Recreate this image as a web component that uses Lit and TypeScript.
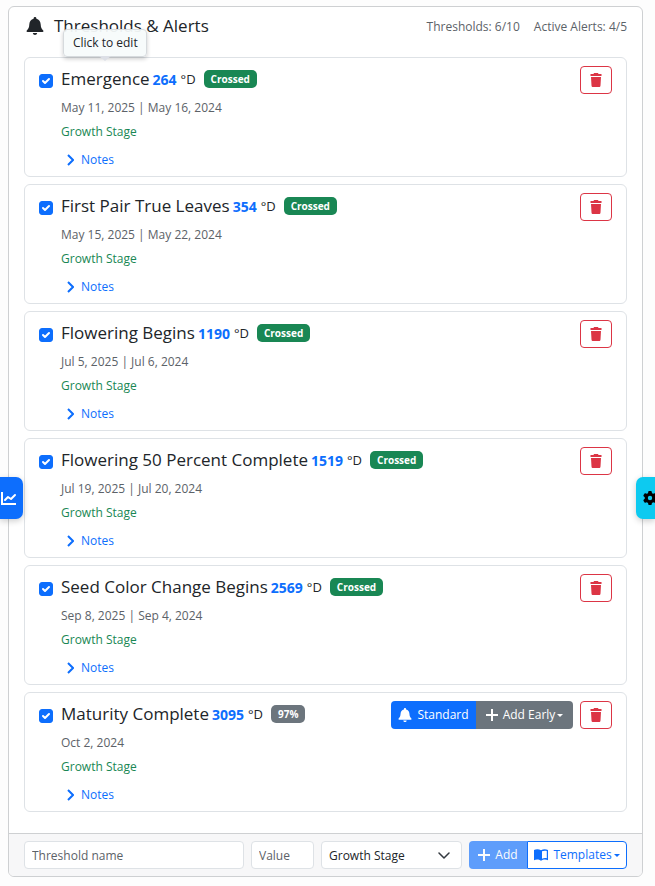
import { LitElement, html, css, svg, nothing } from "lit";
import { customElement, property } from "lit/decorators.js";

interface Threshold {
  name: string;
  value: number;
  status: string;
  crossed: boolean;
  dates: string;
}

const THRESHOLDS: Threshold[] = [
  { name: "Emergence", value: 264, status: "Crossed", crossed: true, dates: "May 11, 2025 | May 16, 2024" },
  { name: "First Pair True Leaves", value: 354, status: "Crossed", crossed: true, dates: "May 15, 2025 | May 22, 2024" },
  { name: "Flowering Begins", value: 1190, status: "Crossed", crossed: true, dates: "Jul 5, 2025 | Jul 6, 2024" },
  { name: "Flowering 50 Percent Complete", value: 1519, status: "Crossed", crossed: true, dates: "Jul 19, 2025 | Jul 20, 2024" },
  { name: "Seed Color Change Begins", value: 2569, status: "Crossed", crossed: true, dates: "Sep 8, 2025 | Sep 4, 2024" },
  { name: "Maturity Complete", value: 3095, status: "97%", crossed: false, dates: "Oct 2, 2024" },
];

const shapes = {
  bell: svg`<path fill="currentColor" d="M9 0C8.200 0 7.600 .6 7.600 1.400V1.800C5 2.500 3.400 4.600 3.300 7.500C3.200 10.500 2.400 12 .8 13.500C.2 14.200 .6 15 1.400 15H16.600C17.400 15 17.800 14.200 17.200 13.500C15.600 12 14.800 10.500 14.700 7.500C14.600 4.600 13 2.500 10.400 1.800V1.400C10.400 .6 9.800 0 9 0ZM6.800 16C7 17.300 7.900 18 9 18S11 17.300 11.200 16Z"/>`,
  trash: svg`<path fill="currentColor" d="M4 0H8L8.500 1H11.500V3H.5V1H3.500ZM1 4H11L10.500 12.500C10.400 13.500 9.900 14 9 14H3C2.100 14 1.600 13.500 1.500 12.500Z"/>`,
  gear: svg`<path fill="currentColor" d="M495.9 166.6c3.2 8.7 .5 18.4-6.4 24.6l-43.3 39.4c1.1 8.3 1.7 16.8 1.7 25.4s-.6 17.1-1.7 25.4l43.3 39.4c6.9 6.2 9.6 15.9 6.4 24.6c-4.4 11.9-9.7 23.3-15.8 34.3l-4.7 8.1c-6.6 11-14 21.4-22.1 31.2c-5.9 7.2-15.7 9.6-24.5 6.8l-55.7-17.7c-13.4 10.3-28.2 18.9-44 25.4l-12.5 57.1c-2 9.1-9 16.3-18.2 17.8c-13.8 2.3-28 3.5-42.5 3.5s-28.7-1.2-42.5-3.5c-9.2-1.5-16.2-8.7-18.2-17.8l-12.5-57.1c-15.8-6.5-30.6-15.1-44-25.4L83.1 425.9c-8.8 2.8-18.6 .3-24.5-6.8c-8.1-9.8-15.5-20.2-22.1-31.2l-4.7-8.1c-6.1-11-11.4-22.4-15.8-34.3c-3.2-8.7-.5-18.4 6.4-24.6l43.3-39.4C64.6 273.1 64 264.6 64 256s.6-17.1 1.7-25.4L22.4 191.2c-6.9-6.2-9.6-15.9-6.4-24.6c4.4-11.9 9.7-23.3 15.8-34.3l4.7-8.1c6.6-11 14-21.4 22.1-31.2c5.9-7.2 15.7-9.6 24.5-6.8l55.7 17.7c13.4-10.3 28.2-18.9 44-25.4l12.5-57.1c2-9.1 9-16.3 18.2-17.8C227.3 1.2 241.5 0 256 0s28.7 1.2 42.5 3.5c9.2 1.5 16.2 8.7 18.2 17.8l12.5 57.1c15.8 6.5 30.6 15.1 44 25.4l55.7-17.7c8.8-2.8 18.6-.3 24.5 6.8c8.1 9.8 15.5 20.2 22.1 31.2l4.7 8.1c6.1 11 11.4 22.4 15.8 34.3zM256 336a80 80 0 1 0 0-160 80 80 0 1 0 0 160z"/>`,
  chart: svg`<g fill="none" stroke="currentColor" stroke-width="2"><path d="M1 1v12h14"/><path d="M4 9l3-3 3 2 4-4" stroke-linecap="round" stroke-linejoin="round"/></g>`,
  plus: svg`<path d="M6 0v12M0 6h12" fill="none" stroke="currentColor" stroke-width="2"/>`,
  chevron: svg`<path d="M1 1l5 5-5 5" fill="none" stroke="currentColor" stroke-width="2"/>`,
  down: svg`<path d="M1 1l5 5 5-5" fill="none" stroke="currentColor" stroke-width="1.5" stroke-linecap="round" stroke-linejoin="round"/>`,
  check: svg`<path d="M4 7l2 2 4-4" fill="none" stroke="currentColor" stroke-width="2" stroke-linecap="round" stroke-linejoin="round"/>`,
  book: svg`<path fill="currentColor" fill-rule="evenodd" d="M0 2C2 1 5 1 7 2.200C9 1 12 1 14 2V12.200C12 11.300 9 11.300 7 12.800C5 11.300 2 11.300 0 12.200ZM8 3.300V10.700C9.500 10.100 11.400 9.900 12.800 10.300V3C11.400 2.500 9.500 2.500 8 3.300Z"/>`,
};

const icon = (shape: unknown, box: string, size: string) =>
  html`<svg class="icon ${size}" viewBox=${box} aria-hidden="true">${shape}</svg>`;

const shared = css`
  * { box-sizing: border-box; }
  button, input, select { font: inherit; margin: 0; }
  .icon { display: block; flex: none; }
  .s12 { width: 12px; height: 14px; }
  .s14 { width: 14px; height: 14px; }
  .s16 { width: 16px; height: 14px; }
  .btn {
    display: inline-flex; align-items: center; justify-content: center; gap: 5px;
    height: 28px; padding: 0 7px; border: 1px solid transparent; border-radius: 4px;
    white-space: nowrap; line-height: 18px; cursor: pointer;
  }
  .group { display: flex; flex: none; }
  .group .btn:first-child { border-radius: 4px 0 0 4px; }
  .group .btn:last-child { border-radius: 0 4px 4px 0; }
  .menu { display: inline-flex; align-items: center; gap: 2px; }
  .caret { width: 0; height: 0; border: 3px solid transparent; border-top-color: currentColor; border-bottom: 0; }
`;

@customElement("threshold-item")
export class ThresholdItem extends LitElement {
  @property({ attribute: false }) item!: Threshold;
  @property({ type: Boolean }) hint = false;

  static styles = [shared, css`
    :host {
      display: flex; align-items: flex-start; gap: 8px;
      padding: 8px 14px 6px; border: 1px solid #dee2e6; border-radius: 6px; background: #fff;
    }
    .check { position: relative; display: block; flex: none; margin-top: 8px; color: #fff; }
    .check input { display: block; appearance: none; width: 14px; height: 14px; border: 1px solid #adb5bd; border-radius: 3px; background: #fff; }
    .check input:checked { background: #0d6efd; border-color: #0d6efd; }
    .check .icon { position: absolute; inset: 0; pointer-events: none; }
    .main { flex: 1; min-width: 0; display: flex; flex-direction: column; align-items: flex-start; gap: 3px; }
    .head { display: flex; align-items: center; height: 26px; margin-bottom: 2px; white-space: nowrap; }
    .name { position: relative; font-size: 17px; line-height: 26px; }
    .value { margin-left: 3px; font-size: 14px; font-weight: 700; color: #0d6efd; }
    .unit { margin-left: 4px; font-size: 13px; }
    .badge {
      margin-left: 8px; padding: 0 7px; border-radius: 5px; background: #6c757d;
      color: #fff; font-size: 10px; font-weight: 700; line-height: 18px;
    }
    .badge.crossed { background: #198754; }
    .line { line-height: 21px; color: #5c6268; }
    .stage { color: #198754; }
    .notes {
      display: flex; align-items: center; gap: 7px; margin: 4px 0 0; padding: 0 0 0 6px;
      border: 0; background: none; color: #0d6efd; line-height: 21px; cursor: pointer;
    }
    .chev { width: 7px; height: 12px; }
    .actions { display: flex; flex: none; gap: 7px; }
    .standard { background: #0d6efd; color: #fff; width: 85px; }
    .early { background: #6c757d; color: #fff; width: 97px; }
    .delete { width: 32px; padding: 0; border-color: #dc3545; background: #fff; color: #dc3545; }
    .tip {
      position: absolute; left: 50%; bottom: 35px; transform: translateX(-50%);
      width: 84px; border: 1px solid #d6dadd; border-radius: 4px; background: rgba(247, 251, 251, 0.94);
      box-shadow: 0 2px 4px rgba(0, 0, 0, 0.2); color: #212529; font-size: 12px; line-height: 26px; text-align: center;
    }
    .tip::after {
      content: ""; position: absolute; top: 100%; left: 50%; margin-left: -6px;
      border: 6px solid transparent; border-top: 5px solid #dcdfe6; border-bottom: 0;
    }
  `];

  render() {
    const t = this.item;
    return html`
      <label class="check">
        <input type="checkbox" aria-label="Track ${t.name}" checked>
        ${icon(shapes.check, "0 0 14 14", "s14")}
      </label>
      <div class="main">
        <div class="head">
          <span class="name">${t.name}${this.hint ? html`<span class="tip" role="tooltip">Click to edit</span>` : nothing}</span>
          <span class="value">${t.value}</span>
          <span class="unit">°D</span>
          <span class="badge ${t.crossed ? "crossed" : ""}">${t.status}</span>
        </div>
        <div class="line">${t.dates}</div>
        <div class="line stage">Growth Stage</div>
        <button class="notes" type="button">${icon(shapes.chevron, "0 0 7 12", "chev")}Notes</button>
      </div>
      <div class="actions">
        ${t.crossed ? nothing : html`
          <div class="group">
            <button class="btn standard" type="button">${icon(shapes.bell, "0 0 18 18", "s14")}Standard</button>
            <button class="btn early" type="button">${icon(shapes.plus, "0 0 12 12", "s12")}<span class="menu">Add Early<span class="caret"></span></span></button>
          </div>`}
        <button class="btn delete" type="button" aria-label="Delete ${t.name}">${icon(shapes.trash, "0 0 12 14", "s12")}</button>
      </div>
    `;
  }
}

@customElement("app-root")
export class AppRoot extends LitElement {
  static styles = [shared, css`
    :host {
      display: block; padding: 6px 12px 9px 8px; background: #fdfdfd; overflow: hidden;
      font-family: "Open Sans", "Noto Sans", sans-serif; font-size: 12px; color: #212529;
    }
    .panel { border: 1px solid #ced0d2; border-radius: 6px; background: #fff; }
    .body { padding: 6px 15px 21px; }
    .header { display: flex; align-items: center; gap: 10px; height: 26px; margin-bottom: 18px; white-space: nowrap; }
    .header-bell { width: 18px; height: 18px; margin-left: 2px; }
    h1 { flex: 1; margin: 0; font-size: 17px; font-weight: 400; line-height: 26px; }
    .counts { display: flex; gap: 14px; color: #5c6268; }
    .list { display: grid; gap: 7px; }
    .footer {
      display: flex; gap: 7px; padding: 7px 15px; border-top: 1px solid #ced0d2;
      border-radius: 0 0 5px 5px; background: #f7f7f8;
    }
    .field { height: 28px; min-width: 0; padding: 0 7px; border: 1px solid #dee2e6; border-radius: 4px; background: #fff; color: #212529; }
    .field::placeholder { color: #5c6268; opacity: 1; }
    .grow { flex: 1; }
    .value { width: 63px; }
    .pick { position: relative; width: 141px; }
    .pick .field { appearance: none; width: 100%; }
    .arrow { position: absolute; right: 12px; top: 11px; width: 12px; height: 7px; color: #343a40; pointer-events: none; }
    .add { width: 58px; background: #0d6efd; color: #fff; opacity: 0.65; }
    .templates { width: 100px; border-color: #0d6efd; background: #fff; color: #0d6efd; }
    .tab { position: fixed; top: 477px; display: flex; align-items: center; height: 42px; border: 0; box-shadow: 0 2px 6px rgba(0, 0, 0, 0.2); }
    .left { left: 0; width: 23px; padding: 0 0 0 1px; border-radius: 0 7px 7px 0; background: #0d6efd; color: #fff; }
    .right { right: 0; width: 19px; padding: 0 0 0 7px; border-radius: 7px 0 0 7px; background: #0dcaf0; color: #000; overflow: hidden; }
  `];

  render() {
    return html`
      <section class="panel">
        <div class="body">
          <header class="header">
            ${icon(shapes.bell, "0 0 18 18", "header-bell")}
            <h1>Thresholds &amp; Alerts</h1>
            <div class="counts"><span>Thresholds: 6/10</span><span>Active Alerts: 4/5</span></div>
          </header>
          <div class="list">
            ${THRESHOLDS.map((t, i) => html`<threshold-item .item=${t} ?hint=${i === 0}></threshold-item>`)}
          </div>
        </div>
        <form class="footer">
          <input class="field grow" type="text" placeholder="Threshold name" aria-label="Threshold name">
          <input class="field value" type="text" placeholder="Value" aria-label="Value">
          <div class="pick">
            <select class="field" aria-label="Type"><option>Growth Stage</option></select>
            ${icon(shapes.down, "0 0 12 7", "arrow")}
          </div>
          <div class="group">
            <button class="btn add" type="button" disabled>${icon(shapes.plus, "0 0 12 12", "s12")}Add</button>
            <button class="btn templates" type="button">${icon(shapes.book, "0 0 14 14", "s14")}<span class="menu">Templates<span class="caret"></span></span></button>
          </div>
        </form>
      </section>
      <button class="tab left" type="button" aria-label="Open chart">${icon(shapes.chart, "0 0 16 14", "s16")}</button>
      <button class="tab right" type="button" aria-label="Open settings">${icon(shapes.gear, "0 0 512 512", "s14")}</button>
    `;
  }
}
